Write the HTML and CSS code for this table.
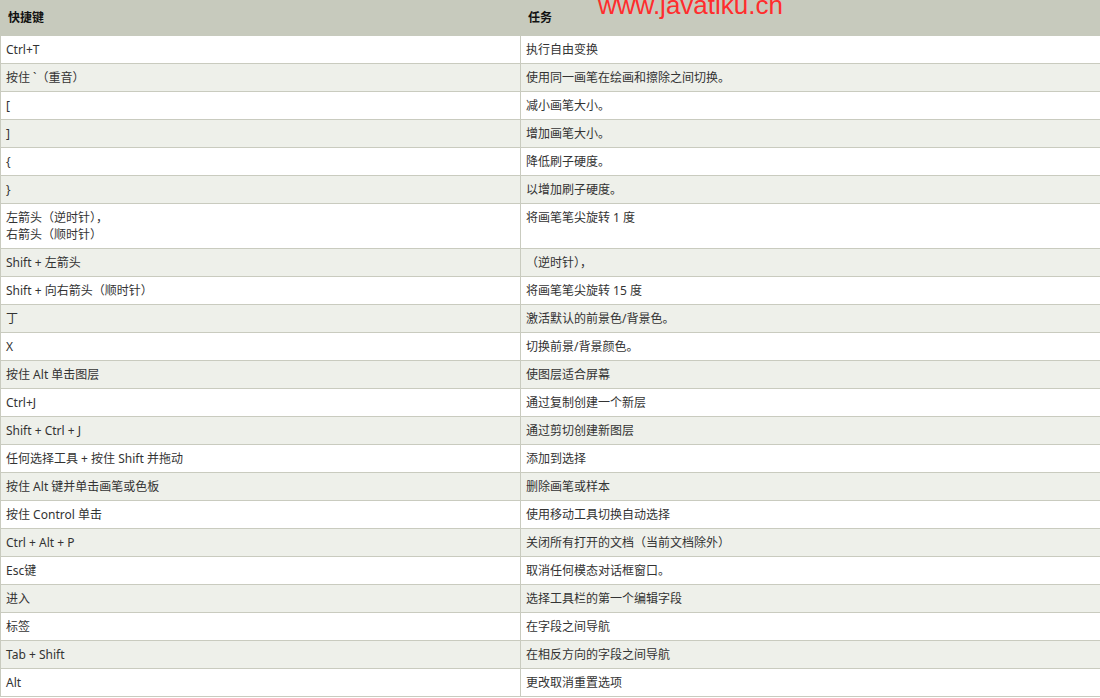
FILE: index.html
```html
<!DOCTYPE html>
<html lang="zh">
<head>
<meta charset="utf-8">
<title>快捷键</title>
<link rel="stylesheet" href="styles.css">
</head>
<body>
<div class="wrap">
<table class="keys">
<colgroup><col class="c1"><col class="c2"></colgroup>
<thead>
<tr><th>快捷键</th><th>任务</th></tr>
</thead>
<tbody>
<tr><td>Ctrl+T</td><td>执行自由变换</td></tr>
<tr><td>按住 `（重音）</td><td>使用同一画笔在绘画和擦除之间切换。</td></tr>
<tr><td>[</td><td>减小画笔大小。</td></tr>
<tr><td>]</td><td>增加画笔大小。</td></tr>
<tr><td>{</td><td>降低刷子硬度。</td></tr>
<tr><td>}</td><td>以增加刷子硬度。</td></tr>
<tr class="top"><td>左箭头（逆时针），<br>右箭头（顺时针）</td><td>将画笔笔尖旋转 1 度</td></tr>
<tr><td>Shift + 左箭头</td><td>（逆时针），</td></tr>
<tr><td>Shift + 向右箭头（顺时针）</td><td>将画笔笔尖旋转 15 度</td></tr>
<tr><td>丁</td><td>激活默认的前景色/背景色。</td></tr>
<tr><td>X</td><td>切换前景/背景颜色。</td></tr>
<tr><td>按住 Alt 单击图层</td><td>使图层适合屏幕</td></tr>
<tr><td>Ctrl+J</td><td>通过复制创建一个新层</td></tr>
<tr><td>Shift + Ctrl + J</td><td>通过剪切创建新图层</td></tr>
<tr><td>任何选择工具 + 按住 Shift 并拖动</td><td>添加到选择</td></tr>
<tr><td>按住 Alt 键并单击画笔或色板</td><td>删除画笔或样本</td></tr>
<tr><td>按住 Control 单击</td><td>使用移动工具切换自动选择</td></tr>
<tr><td>Ctrl + Alt + P</td><td>关闭所有打开的文档（当前文档除外）</td></tr>
<tr><td>Esc键</td><td>取消任何模态对话框窗口。</td></tr>
<tr><td>进入</td><td>选择工具栏的第一个编辑字段</td></tr>
<tr><td>标签</td><td>在字段之间导航</td></tr>
<tr><td>Tab + Shift</td><td>在相反方向的字段之间导航</td></tr>
<tr><td>Alt</td><td>更改取消重置选项</td></tr>
</tbody>
</table>
<div class="watermark">www.javatiku.cn</div>
</div>
</body>
</html>
```
FILE: styles.css
```css
html, body {
  margin: 0;
  padding: 0;
  background: #fff;
}
.wrap {
  position: relative;
  width: 1100px;
}
.keys {
  width: 1100px;
  table-layout: fixed;
  border-collapse: collapse;
  font-family: "Noto Sans", "Noto Sans CJK SC", sans-serif;
  font-size: 12px;
  line-height: 17px;
  color: #333;
}
.keys .c1 { width: 520px; }
.keys .c2 { width: 580px; }
.keys th {
  background: #c7cabd;
  border: 1px solid #c7cabd;
  text-align: left;
  font-weight: bold;
  color: #111;
  padding: 8px 7px 9px 7px;
}
.keys td {
  border: 1px solid #c9cbbf;
  padding: 5px 5px 5px 5px;
  vertical-align: top;
  white-space: nowrap;
}
.keys tbody tr:nth-child(odd) td { background: #fff; }
.keys tbody tr:nth-child(even) td { background: #eef0ea; }
.watermark {
  position: absolute;
  left: 598px;
  top: -10px;
  font-family: "Liberation Sans", Arial, sans-serif;
  font-size: 26px;
  line-height: 30px;
  color: #ff2d2d;
  white-space: nowrap;
}
```
